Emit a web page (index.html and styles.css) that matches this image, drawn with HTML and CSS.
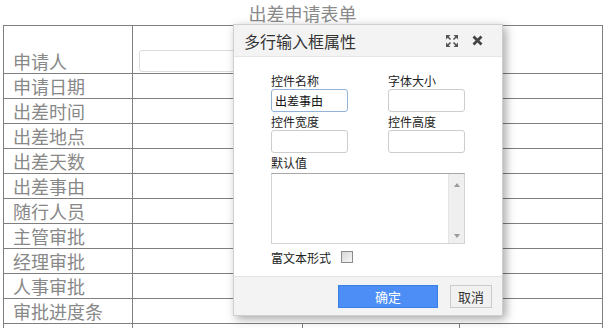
FILE: index.html
```html
<!DOCTYPE html>
<html lang="zh-CN">
<head>
    <meta charset="UTF-8">
    <meta name="viewport" content="width=device-width, initial-scale=1.0">
    <title>出差申请表单</title>
    <link rel="stylesheet" href="styles.css">
</head>
<body>
    <div class="page">
        <h1 class="form-title">出差申请表单</h1>
        <table class="form-table">
            <colgroup>
                <col class="col-label">
                <col class="col-a">
                <col class="col-b">
                <col class="col-c">
            </colgroup>
            <tr class="first-row">
                <td class="label">申请人</td>
                <td colspan="3" class="input-cell"><input class="cell-input" type="text"></td>
            </tr>
            <tr><td class="label">申请日期</td><td colspan="3"></td></tr>
            <tr><td class="label">出差时间</td><td colspan="3"></td></tr>
            <tr><td class="label">出差地点</td><td colspan="3"></td></tr>
            <tr><td class="label">出差天数</td><td colspan="3"></td></tr>
            <tr><td class="label">出差事由</td><td colspan="3"></td></tr>
            <tr><td class="label">随行人员</td><td colspan="3"></td></tr>
            <tr><td class="label">主管审批</td><td colspan="3"></td></tr>
            <tr><td class="label">经理审批</td><td colspan="3"></td></tr>
            <tr><td class="label">人事审批</td><td colspan="3"></td></tr>
            <tr><td class="label">审批进度条</td><td colspan="3"></td></tr>
            <tr><td class="label">经办签名</td><td></td><td></td><td></td></tr>
        </table>
    </div>

    <!-- property dialog for the textarea control -->
    <div class="dialog">
        <div class="dialog-head">
            <span class="dialog-title">多行输入框属性</span>
            <span class="dialog-tools">
                <svg class="icon-max" width="12" height="12" viewBox="0 0 12 12">
                    <path d="M0 0H4.5L0 4.5Z M12 0V4.5L7.5 0Z M0 12V7.5L4.5 12Z M12 12H7.5L12 7.5Z" fill="#555"/>
                    <path d="M1.5 1.5L4.5 4.5 M10.5 1.5L7.5 4.5 M1.5 10.5L4.5 7.5 M10.5 10.5L7.5 7.5" stroke="#555" stroke-width="1.6"/>
                </svg>
                <svg class="icon-close" width="11" height="11" viewBox="0 0 11 11">
                    <path d="M1.5 1.5L9.5 9.5 M9.5 1.5L1.5 9.5" stroke="#444" stroke-width="2.8"/>
                </svg>
            </span>
        </div>
        <div class="dialog-body">
            <div class="field-grid">
                <div class="field">
                    <label>控件名称</label>
                    <input class="text-input focused" type="text" value="出差事由">
                </div>
                <div class="field">
                    <label>字体大小</label>
                    <input class="text-input" type="text">
                </div>
                <div class="field">
                    <label>控件宽度</label>
                    <input class="text-input" type="text">
                </div>
                <div class="field">
                    <label>控件高度</label>
                    <input class="text-input" type="text">
                </div>
            </div>
            <div class="field">
                <label>默认值</label>
                <div class="textarea-box">
                    <textarea class="default-value"></textarea>
                    <div class="scrollbar">
                        <span class="arrow-up"></span>
                        <span class="arrow-down"></span>
                    </div>
                </div>
            </div>
            <div class="check-row">
                <span>富文本形式</span>
                <input class="rich-check" type="checkbox">
            </div>
        </div>
        <div class="dialog-foot">
            <button class="btn btn-primary">确定</button>
            <button class="btn">取消</button>
        </div>
    </div>
</body>
</html>
```

FILE: styles.css
```css
body {
    margin: 0;
    font-family: "Noto Sans CJK SC", "Noto Sans", sans-serif;
    background-color: #fff;
    color: #333;
    overflow: hidden;
}

.page {
    padding: 0 3px;
}

.form-title {
    margin: 0;
    height: 25px;
    font-size: 18px;
    font-weight: normal;
    line-height: 26px;
    color: #8a8a8a;
    text-align: center;
}

.form-table {
    width: 600px;
    table-layout: fixed;
    border-collapse: collapse;
    border: 1px solid #7f7f7f;
}

.col-label {
    width: 129px;
}

.col-a {
    width: 170px;
}

.col-b {
    width: 157px;
}

.form-table td {
    height: 24px;
    padding: 0 9px;
    border: 1px solid #7f7f7f;
    font-size: 18px;
    line-height: 24px;
    color: #888;
    vertical-align: bottom;
    white-space: nowrap;
}

.first-row td {
    height: 46px;
}

.form-table .input-cell {
    padding: 0 6px 1px;
}

.cell-input {
    display: block;
    width: 320px;
    height: 22px;
    box-sizing: border-box;
    border: 1px solid #dcdcdc;
    border-radius: 3px;
    margin: 0;
}

.dialog {
    position: absolute;
    left: 233px;
    top: 24px;
    width: 270px;
    height: 292px;
    box-sizing: border-box;
    display: flex;
    flex-direction: column;
    background-color: #fff;
    border: 1px solid #cfcfcf;
    box-shadow: 3px 3px 9px rgba(0, 0, 0, 0.35);
}

.dialog-head {
    height: 32px;
    box-sizing: border-box;
    display: flex;
    align-items: center;
    justify-content: space-between;
    padding: 0 19px 0 10px;
    background-color: #f3f3f3;
    border-bottom: 1px solid #e6e6e6;
}

.dialog-title {
    font-size: 16px;
    color: #333;
}

.dialog-tools {
    display: flex;
    align-items: center;
    gap: 14px;
}

.dialog-tools svg {
    display: block;
}

.dialog-body {
    flex: 1;
    padding: 15px 0 0 37px;
}

.field-grid {
    display: grid;
    grid-template-columns: 117px 77px;
    row-gap: 1px;
}

.field label,
.check-row span {
    display: block;
    font-size: 12px;
    line-height: 17px;
    color: #222;
}

.text-input {
    display: block;
    width: 77px;
    height: 23px;
    box-sizing: border-box;
    margin: 0;
    padding: 0 3px;
    border: 1px solid #cdcdcd;
    border-radius: 3px;
    font-family: inherit;
    font-size: 12px;
    color: #111;
}

.text-input.focused {
    border-color: #93b3d9;
}

.field-grid + .field {
    margin-top: 1px;
}

.textarea-box {
    display: flex;
    width: 194px;
    height: 71px;
    margin-top: 2px;
    box-sizing: border-box;
    border: 1px solid #d3d3d3;
    border-top-color: #a9a9a9;
}

.default-value {
    flex: 1;
    border: none;
    margin: 0;
    padding: 2px;
    resize: none;
    outline: none;
}

.scrollbar {
    width: 16px;
    display: flex;
    flex-direction: column;
    justify-content: space-between;
    align-items: center;
    padding: 9px 0 5px;
    box-sizing: border-box;
    background-color: #efefef;
    border-left: 1px solid #e4e4e4;
}

.arrow-up,
.arrow-down {
    width: 0;
    height: 0;
    border-left: 3.5px solid transparent;
    border-right: 3.5px solid transparent;
}

.arrow-up {
    border-bottom: 4px solid #9a9a9a;
}

.arrow-down {
    border-top: 4px solid #9a9a9a;
}

.check-row {
    display: flex;
    align-items: center;
    height: 18px;
    margin-top: 4px;
}

.rich-check {
    appearance: none;
    width: 12px;
    height: 12px;
    margin: 0 0 0 10px;
    box-sizing: border-box;
    border: 1px solid #8c8c8c;
    background: linear-gradient(135deg, #d6d6d6, #f7f7f7);
}

.dialog-foot {
    height: 39px;
    box-sizing: border-box;
    display: flex;
    justify-content: flex-end;
    align-items: flex-start;
    gap: 12px;
    padding: 8px 10px 0 0;
    background-color: #f3f3f3;
    border-top: 1px solid #e3e3e3;
}

.btn {
    height: 23px;
    width: 42px;
    padding: 0;
    box-sizing: border-box;
    border: 1px solid #cbcbcb;
    background-color: #f1f1f1;
    font-family: inherit;
    font-size: 13px;
    color: #333;
}

.btn-primary {
    width: 100px;
    border-color: #3b7ee6;
    background-color: #4c8ef6;
    color: #fff;
}
```
